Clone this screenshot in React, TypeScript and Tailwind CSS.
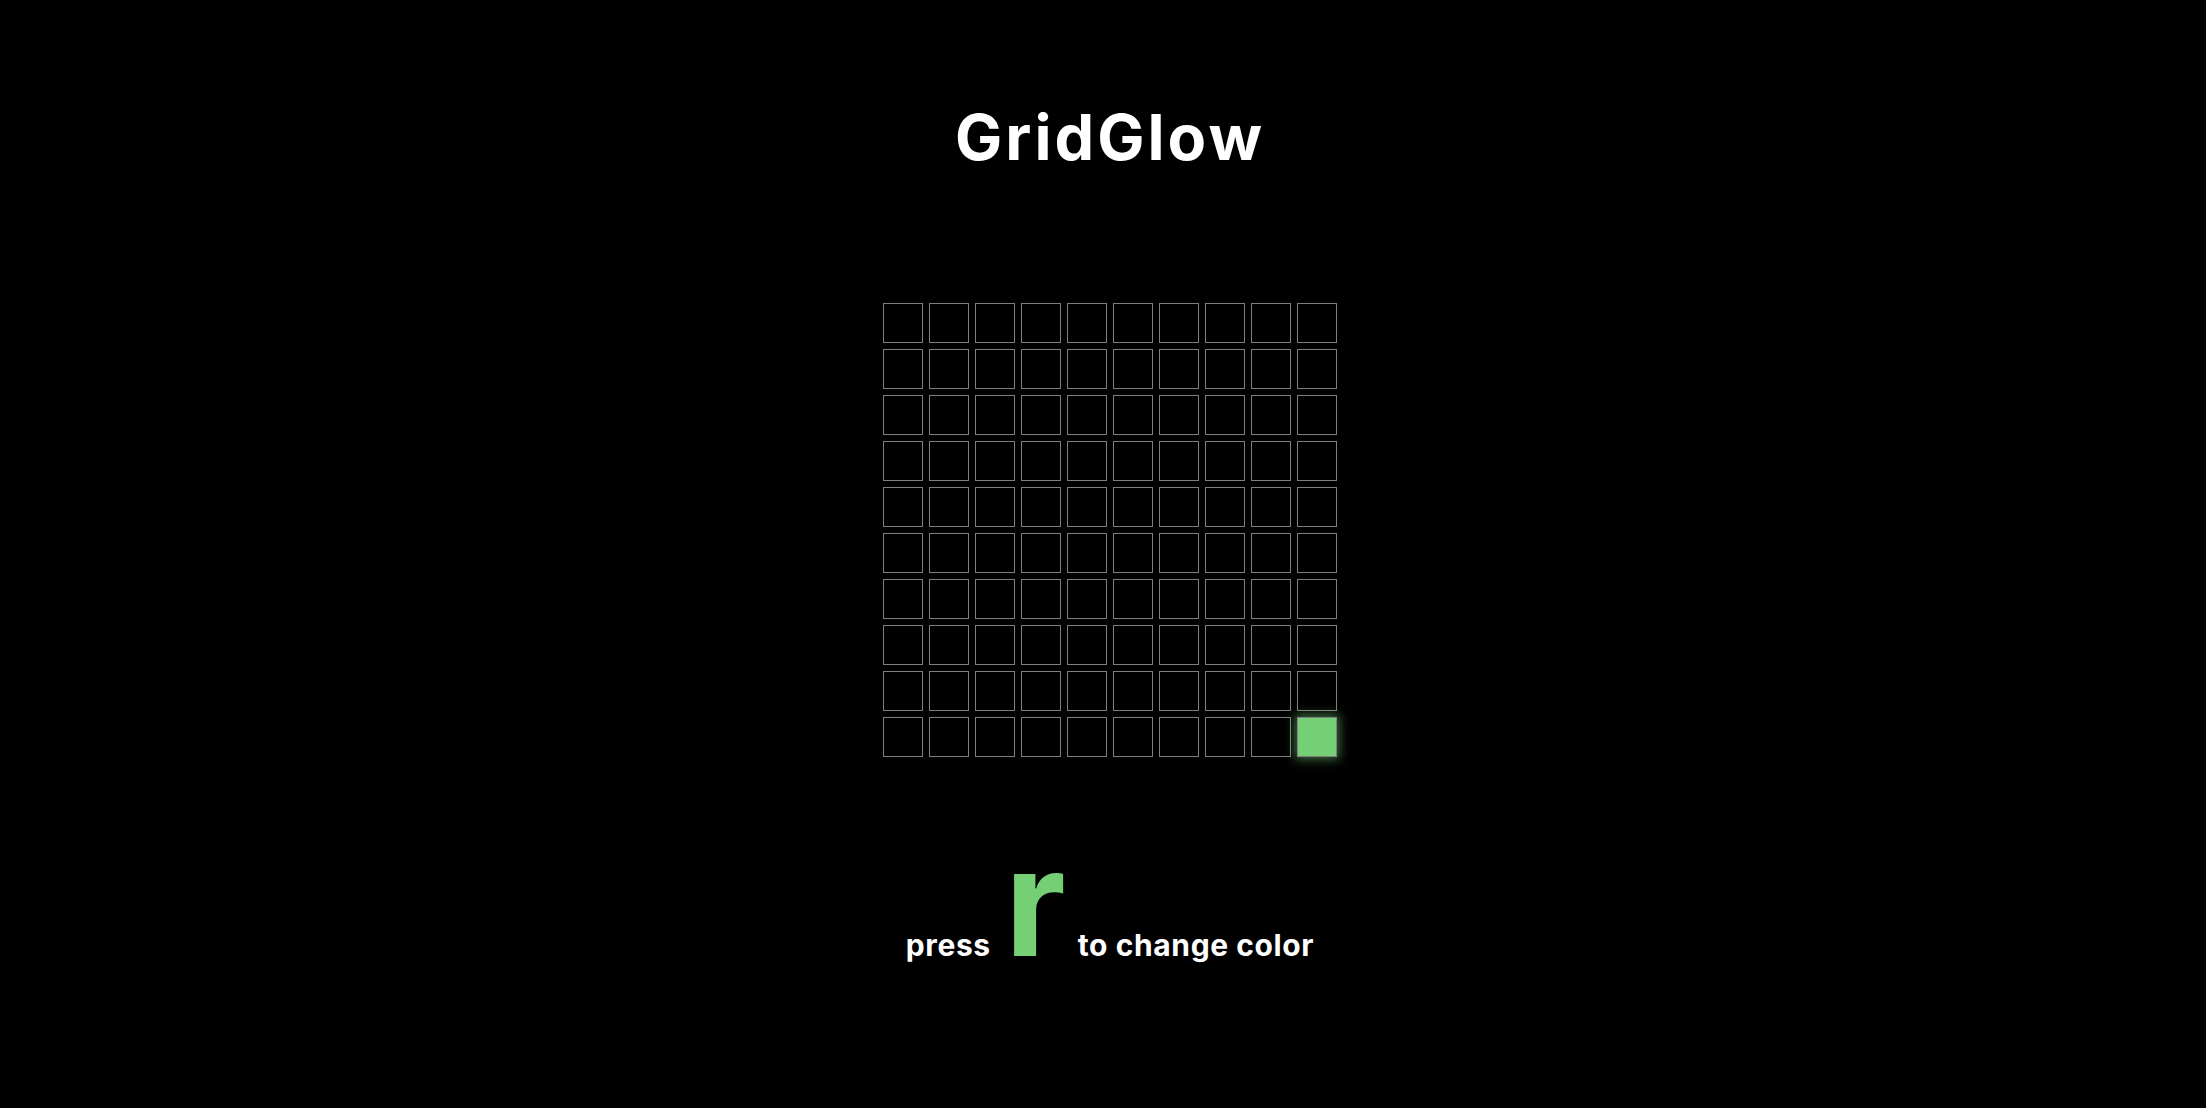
import React from 'react';

const SIZE = 10;

export default function App() {
  const cells = Array.from({ length: SIZE * SIZE }, (_, i) => i);
  const lit = SIZE * SIZE - 1;

  return (
    <div
      className="flex min-h-screen flex-col items-center bg-black pl-[14px] text-white"
      style={{ fontFamily: 'Inter, "Open Sans", sans-serif' }}
    >
      <h1 className="mt-[106px] text-[63px] font-bold leading-none tracking-[3px]">
        GridGlow
      </h1>

      <div className="mt-[134px] grid grid-cols-[repeat(10,40px)] gap-[6px]">
        {cells.map((i) => (
          <div
            key={i}
            className={
              i === lit
                ? 'h-[40px] w-[40px] border border-[#7f7f7f] bg-[#75d075] shadow-[0_0_10px_2px_rgba(117,208,117,0.55)]'
                : 'h-[40px] w-[40px] border border-[#7f7f7f] bg-black'
            }
          />
        ))}
      </div>

      <div className="mt-[70px] flex items-baseline font-bold">
        <span className="text-[30px] leading-none tracking-[0.6px]">press</span>
        <span className="ml-[14px] mr-[12px] text-[150px] leading-none text-[#75d075]">r</span>
        <span className="text-[30px] leading-none tracking-[0.6px]">to change color</span>
      </div>
    </div>
  );
}
